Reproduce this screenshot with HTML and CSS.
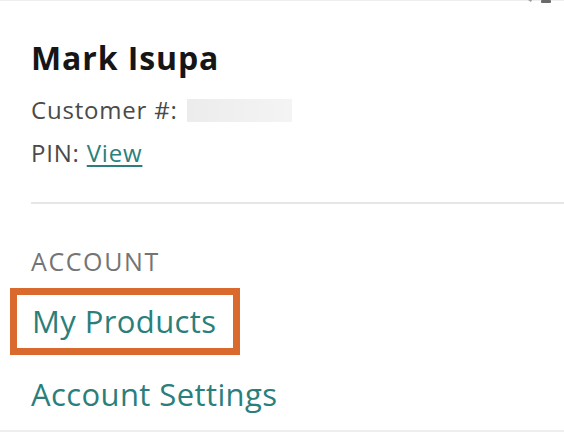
FILE: index.html
```html
<!DOCTYPE html>
<html lang="en">
<head>
<meta charset="utf-8">
<title>Account menu</title>
<link rel="stylesheet" href="styles.css">
</head>
<body>
<div class="topbar">
  <svg class="top-icon" width="30" height="5" viewBox="0 0 30 5" aria-hidden="true">
    <path d="M2 0 L6 0 L5 2 Z" fill="#9a9a9a"/>
    <rect x="15" y="0" width="10" height="3" rx="1" fill="#6a6a6a"/>
  </svg>
</div>
<div class="panel">
  <section class="profile">
    <h1 class="name">Mark Isupa</h1>
    <div class="meta">Customer #: <span class="masked"></span></div>
    <div class="meta">PIN: <a class="link" href="#">View</a></div>
  </section>
  <hr class="divider">
  <nav class="menu">
    <div class="menu-title">ACCOUNT</div>
    <a class="menu-item highlighted" href="#">My Products</a>
    <a class="menu-item" href="#">Account Settings</a>
  </nav>
</div>
<hr class="bottom-line">
</body>
</html>
```
FILE: styles.css
```css
html, body {
  margin: 0;
  padding: 0;
  background: #ffffff;
}
body {
  width: 564px;
  height: 438px;
  overflow: hidden;
  font-family: "Open Sans", "DejaVu Sans", sans-serif;
  color: #444444;
}
.topbar {
  height: 4px;
  display: flex;
  justify-content: flex-end;
  border-top: 1px solid #eeeeee;
  box-sizing: border-box;
}
.top-icon {
  margin-right: 8px;
  margin-top: -1px;
}
.panel {
  padding-left: 31px;
}
.profile {
  padding-top: 34px;
}
.name {
  margin: 0;
  font-size: 32px;
  line-height: 40px;
  font-weight: 700;
  letter-spacing: 0.9px;
  color: #161616;
}
.meta {
  font-size: 24px;
  line-height: 43px;
  font-weight: 500;
  letter-spacing: 0.8px;
  color: #4a4a4a;
}
.profile .name + .meta {
  margin-top: 10px;
}
.masked {
  display: inline-block;
  width: 105px;
  height: 23px;
  margin-left: 2px;
  vertical-align: -3px;
  background: linear-gradient(90deg, #ececec, #f4f4f4);
}
.link {
  color: #2a7f7d;
  text-decoration: underline;
  text-decoration-thickness: 2px;
  text-underline-offset: 3px;
}
.divider {
  margin: 28px 0 0 0;
  border: 0;
  height: 2px;
  background: #e6e6e8;
}
.menu {
  display: flex;
  flex-direction: column;
  align-items: flex-start;
}
.menu-title {
  margin-top: 42px;
  font-size: 25px;
  line-height: 30px;
  font-weight: 500;
  letter-spacing: 1.6px;
  color: #747474;
}
.menu-item {
  font-size: 31px;
  line-height: 42px;
  font-weight: 500;
  letter-spacing: 0.4px;
  color: #2a7f7d;
  text-decoration: none;
}
.menu-item.highlighted {
  margin-top: 12px;
  margin-left: -21px;
  width: 201px;
  padding-left: 15px;
  line-height: 53px;
  border: 7px solid #d9692d;
  white-space: nowrap;
}
.menu-item.highlighted + .menu-item {
  margin-top: 18px;
}
.bottom-line {
  margin: 15px 0 0 0;
  border: 0;
  height: 2px;
  background: #eeeeee;
}
```
